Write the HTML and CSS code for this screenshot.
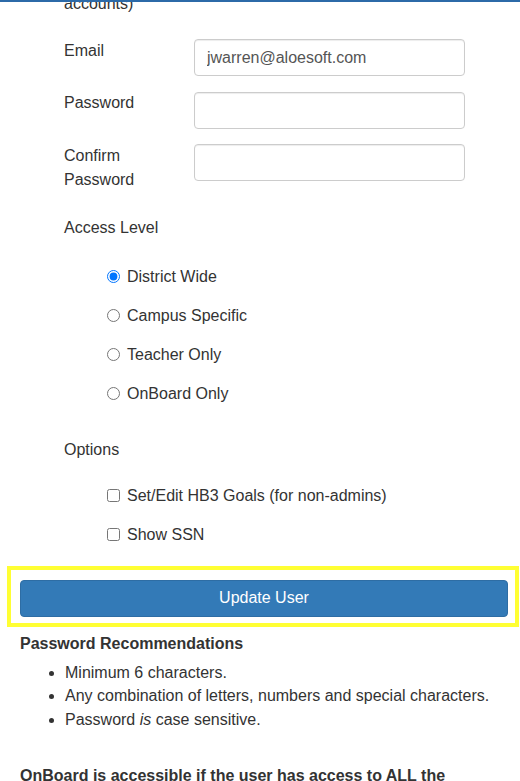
FILE: index.html
```
<!DOCTYPE html>
<html>
<head>
<meta charset="utf-8">
<link rel="stylesheet" href="styles.css">
</head>
<body>
<div class="topbar"></div>
<div class="page">
  <form class="user-form">
    <p class="note">accounts)</p>
    <div class="row">
      <label class="lbl" for="email">Email</label>
      <input class="field" id="email" type="text" value="jwarren@aloesoft.com">
    </div>
    <div class="row">
      <label class="lbl" for="pw">Password</label>
      <input class="field" id="pw" type="password">
    </div>
    <div class="row">
      <label class="lbl" for="pw2">Confirm Password</label>
      <input class="field" id="pw2" type="password">
    </div>

    <div class="section-title access">Access Level</div>
    <div class="choices">
      <label class="choice"><input type="radio" name="lvl" checked> District Wide</label>
      <label class="choice"><input type="radio" name="lvl"> Campus Specific</label>
      <label class="choice"><input type="radio" name="lvl"> Teacher Only</label>
      <label class="choice"><input type="radio" name="lvl"> OnBoard Only</label>
    </div>

    <div class="section-title options">Options</div>
    <div class="choices checks">
      <label class="choice"><input type="checkbox"> Set/Edit HB3 Goals (for non-admins)</label>
      <label class="choice"><input type="checkbox"> Show SSN</label>
    </div>
  </form>

  <div class="highlight">
    <button class="btn-primary" type="button">Update User</button>
  </div>

  <h4 class="rec-title">Password Recommendations</h4>
  <ul class="rec-list">
    <li>Minimum 6 characters.</li>
    <li>Any combination of letters, numbers and special characters.</li>
    <li>Password <em>is</em> case sensitive.</li>
  </ul>

  <p class="onboard">OnBoard is accessible if the user has access to ALL the</p>
</div>
</body>
</html>
```

FILE: styles.css
```
html, body {
  margin: 0;
  padding: 0;
  background: #fff;
}
body {
  font-family: "Liberation Sans", Arial, sans-serif;
  font-size: 16px;
  line-height: 23.5px;
  color: #333;
  overflow: hidden;
}
.topbar {
  position: fixed;
  top: 0;
  left: 0;
  right: 0;
  height: 2px;
  background: #2c6aa8;
  z-index: 5;
}
.page {
  padding: 0 1px 0 7px;
}
.user-form {
  margin: 0;
  padding-left: 57px;
}
.note {
  margin: -8px 0 0 0;
}
.row {
  display: flex;
  align-items: flex-start;
  margin-top: 15px;
}
.note + .row {
  margin-top: 23px;
}
.lbl {
  width: 130px;
  flex: none;
}
.row:nth-of-type(3) .lbl {
  width: 90px;
  margin-right: 40px;
  line-height: 24px;
}
.field {
  box-sizing: border-box;
  width: 271px;
  height: 37px;
  margin: 0.5px 0 0 0;
  padding: 0 12px;
  border: 1px solid #ccc;
  border-radius: 4px;
  box-shadow: inset 0 1px 1px rgba(0,0,0,.075);
  font-family: "Liberation Sans", Arial, sans-serif;
  font-size: 16px;
  color: #555;
  background: #fff;
}
.section-title.access {
  margin-top: 24px;
}
.section-title.options {
  margin-top: 32.5px;
}
.choices {
  display: flex;
  flex-direction: column;
  gap: 15.5px;
  padding-left: 43px;
  margin-top: 25.5px;
}
.choices.checks {
  margin-top: 23px;
}
.choice {
  display: flex;
  align-items: center;
  gap: 4px;
  height: 23.5px;
}
.choice input {
  margin: 0 3px 0 0;
  width: 13px;
  height: 13px;
  flex: none;
}
.highlight {
  margin-top: 19px;
  border: 4px solid #ffff33;
  padding: 10px 7px 6px 9px;
}
.btn-primary {
  display: block;
  width: 100%;
  height: 37px;
  border: 1px solid #2e6da4;
  border-radius: 4px;
  background: #337ab7;
  color: #fff;
  font-family: "Liberation Sans", Arial, sans-serif;
  font-size: 16px;
  padding: 0;
}
.rec-title {
  margin: 5.5px 0 0 13px;
  font-size: 16px;
  font-weight: bold;
  line-height: 23.5px;
}
.rec-list {
  margin: 5px 0 0 0;
  padding-left: 58px;
}
.onboard {
  margin: 33px 0 0 13px;
  font-weight: bold;
}
```
